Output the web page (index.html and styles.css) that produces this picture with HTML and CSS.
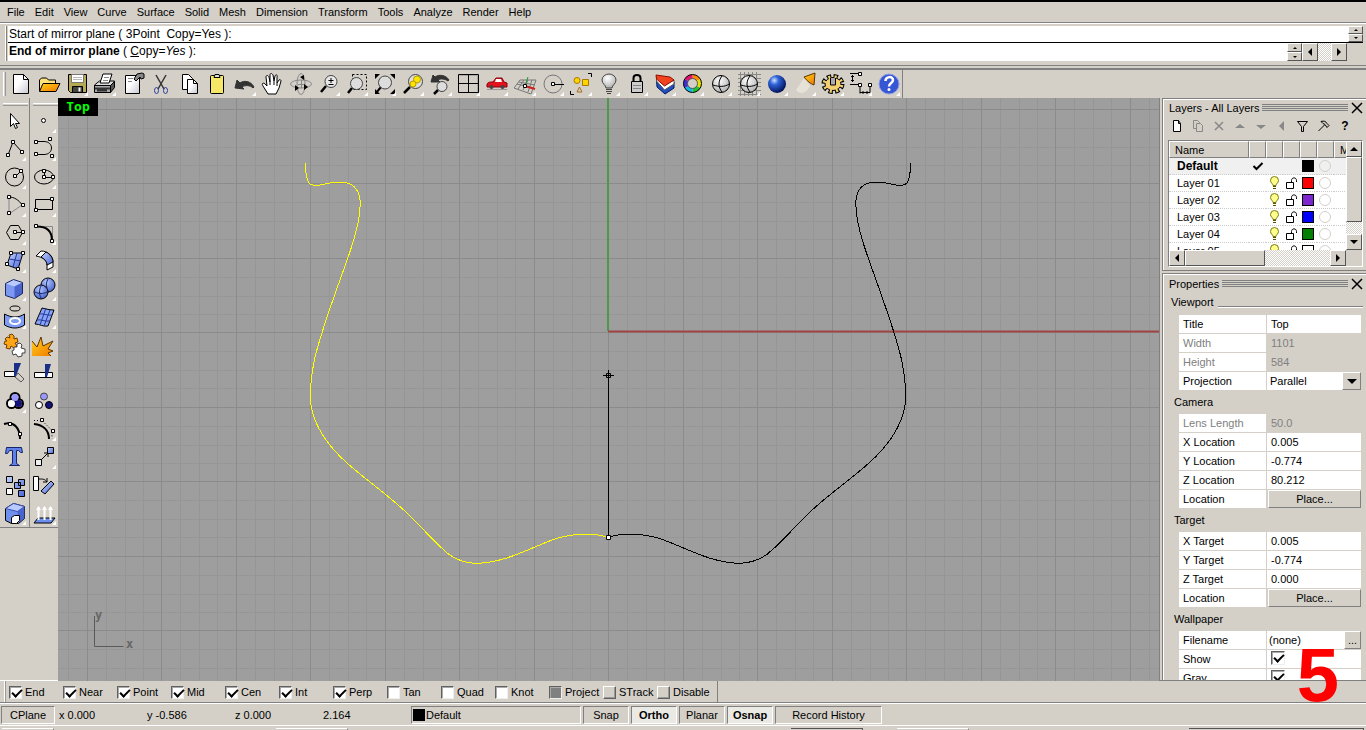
FILE: index.html
```html
<!DOCTYPE html>
<html lang="en">
<head>
<meta charset="utf-8">
<title>Rhinoceros - Top</title>
<link rel="stylesheet" href="styles.css">
</head>
<body>
<svg class="defs" aria-hidden="true">
  <defs>
    <linearGradient id="gBlue" x1="0" y1="0" x2="1" y2="1"><stop offset="0" stop-color="#c3d2fb"/><stop offset="1" stop-color="#4a68d8"/></linearGradient>
    <radialGradient id="gBall" cx="0.35" cy="0.3" r="0.7"><stop offset="0" stop-color="#cfe4ff"/><stop offset="0.35" stop-color="#2f63d8"/><stop offset="1" stop-color="#04145c"/></radialGradient>
    <radialGradient id="gGlobe" cx="0.4" cy="0.3" r="0.8"><stop offset="0" stop-color="#fff"/><stop offset="1" stop-color="#a8a8a8"/></radialGradient>
    <radialGradient id="gSphere" cx="0.4" cy="0.3" r="0.8"><stop offset="0" stop-color="#b4c6ff"/><stop offset="1" stop-color="#3a58c8"/></radialGradient>
    <linearGradient id="gOrange" x1="0" y1="0" x2="1" y2="1"><stop offset="0" stop-color="#ffd21a"/><stop offset="1" stop-color="#f07800"/></linearGradient>
    <linearGradient id="gPaper" x1="0" y1="0" x2="1" y2="1"><stop offset="0.4" stop-color="#fff"/><stop offset="1" stop-color="#c8c8d0"/></linearGradient>
    <symbol id="node" viewBox="0 0 4 4"><path d="M.5.5h3v3h-3z" fill="#fff" stroke="#000"/></symbol>
    <symbol id="bulb" viewBox="0 0 12 14"><path d="M4.500 9.500C4.500 7.500 2 7 2 4.500A4 4 0 0 1 10 4.500C10 7 7.500 7.500 7.500 9.500z" fill="#ffff8c" stroke="#7c7a10"/><path d="M4.500 10.500h3M4.500 12.500h3" stroke="#555500" fill="none"/></symbol>
    <symbol id="unlock" viewBox="0 0 13 14"><path d="M1.500 6.500h7v6h-7zM6.500 6V4.500C6.500 1 11.500 1 11.500 4.500V6" fill="none" stroke="#000"/></symbol>
  </defs>
</svg>
<div class="app">
<nav class="menu">
  <button>File</button><button>Edit</button><button>View</button><button>Curve</button><button>Surface</button><button>Solid</button><button>Mesh</button><button>Dimension</button><button>Transform</button><button>Tools</button><button>Analyze</button><button>Render</button><button>Help</button>
</nav>

<section class="command">
  <div class="cmdbox">
    <div class="cmdrow history">
      <div class="cmdtext">Start of mirror plane ( 3Point&nbsp; Copy=Yes ):</div>
      <div class="spin"><button aria-label="History up"><i class="tri up small"></i></button><button aria-label="History down"><i class="tri down small"></i></button></div>
    </div>
    <div class="cmdrow prompt">
      <div class="cmdtext"><b>End of mirror plane</b> ( <u>C</u>opy=<em>Yes</em> ):</div>
      <div class="spin"><button aria-label="Prompt up"><i class="tri up small"></i></button><button aria-label="Prompt down"><i class="tri down small"></i></button></div>
      <button class="sb" aria-label="Scroll left"><i class="tri left"></i></button><div class="track gap"></div><button class="sb" aria-label="Scroll right"><i class="tri right"></i></button>
      <div class="pad"></div>
    </div>
  </div>
</section>

<div class="dock">
<div class="toolbar">
  <button class="t" aria-label="New"><svg viewBox="0 0 28 28"><path d="M7.500 4.500h10l5 5v14h-15z" fill="url(#gPaper)"/><path d="M17.500 4.500v5h5"/></svg></button>
  <button class="t" aria-label="Open"><svg viewBox="0 0 28 28"><path d="M5.500 21V10l2-2h5l2 2h7v3" fill="#ffe37a"/><path d="M5.500 21.500L9 13.500h17l-4 8z" fill="url(#gOrange)"/></svg></button>
  <button class="t f" aria-label="Save"><svg viewBox="0 0 28 28"><path d="M6.500 4.500h18v18h-16l-2-2z" fill="#b5a954"/><path d="M9.500 4.500h12v8h-12z" fill="#fff" stroke="#777"/><path d="M11 7.500h9M11 9.500h9" stroke="#bbb"/><path d="M10.500 16.500h10v6h-10z" fill="#444"/><path d="M16.500 17.500h2v4h-2z" fill="#fff" stroke="none"/></svg></button>
  <button class="t f" aria-label="Print"><svg viewBox="0 0 28 28"><path d="M4.500 15l5-4h15l-3 5H4.500z" fill="#ddd"/><path d="M10 13l3-9h9l-3 9z" fill="#fff"/><path d="M4.500 15.500h16v7h-16z" fill="#aaa"/><path d="M20.500 22.500l4-5v-6l-4 4z" fill="#555"/><path d="M5 18.500h15M7 20.500h10" stroke-width="2" stroke="#333"/><path d="M14 7.500h5M13 10.500h5" stroke="#888"/></svg></button>
  <button class="t" aria-label="Document properties"><svg viewBox="0 0 28 28"><path d="M7.500 5.500h14v18h-14z" fill="url(#gPaper)"/><path d="M16 9l3-5 5-1 2 1v4l-3 1-1-2-4 4z" fill="#888"/><path d="M10 8.500h5M10 11.500h4" stroke="#888"/></svg></button>
  <button class="t" aria-label="Cut"><svg viewBox="0 0 28 28"><path d="M10 5l8 14M20 5l-8 14" stroke="#333" stroke-width="1.500"/><ellipse cx="10.500" cy="20.500" rx="2" ry="3" stroke="#2c3f9c"/><ellipse cx="19.500" cy="20.500" rx="2" ry="3" stroke="#2c3f9c"/></svg></button>
  <button class="t" aria-label="Copy"><svg viewBox="0 0 28 28"><path d="M8.500 4.500h6l4 4v11h-10z" fill="#fff"/><path d="M13.500 9.500h6l4 4v10h-10z" fill="url(#gPaper)"/><path d="M19.500 9.500v4h4"/></svg></button>
  <button class="t" aria-label="Paste"><svg viewBox="0 0 28 28"><rect x="8.500" y="5.500" width="13" height="18" rx="1" fill="#f6e766"/><path d="M12 7.500l1-3h4l1 3z" fill="#ddd"/></svg></button>
  <button class="t f" aria-label="Undo"><svg viewBox="0 0 28 28"><path d="M5 18l2-8 3 3c4-3 11-2 14 4l-1 1c-3-3-8-3-11-1l2 2z" fill="#333" stroke="#333"/></svg></button>
  <button class="t" aria-label="Pan"><svg viewBox="0 0 28 28"><path d="M10 24l-5-8c-2-3 1-4 3-1l1 1-1-9c0-2 2-2 3 0l1 5V5c0-2 2-2 3 0l1 6 1-5c1-2 3-1 2 1v6l2-3c1-1 2 0 2 1l-2 7-3 6z" fill="#fff"/><path d="M12 12v3M16 11v4M19 13v3"/></svg></button>
  <button class="t" aria-label="Rotate view"><svg viewBox="0 0 28 28"><ellipse cx="15" cy="14" rx="10.500" ry="4" stroke="#888"/><ellipse cx="15" cy="14" rx="4" ry="10.500" stroke="#888"/><path d="M15.500 10v8M12 14.500h7" stroke="#888"/><path d="M9 15l4 3-4 3zM14 7l4-2v5zM18 14l4 3-4 3z" fill="#000" stroke="none"/></svg></button>
  <button class="t f" aria-label="Zoom dynamic"><svg viewBox="0 0 28 28"><path d="M12 16l-5 6" stroke-width="2.500"/><circle cx="17" cy="11.500" r="6" fill="#e8e8e8" stroke="#444"/><path d="M17 8v5M14.500 10.500h5M14.500 14.500h5"/></svg></button>
  <button class="t f" aria-label="Zoom window"><svg viewBox="0 0 28 28"><path d="M10.500 4.500h14v15h-14z" stroke-dasharray="2 2"/><path d="M10 18l-4 5" stroke-width="2.500"/><circle cx="14.500" cy="13.500" r="6" fill="#ddd" stroke="#444"/></svg></button>
  <button class="t f" aria-label="Zoom extents"><svg viewBox="0 0 28 28"><path d="M5 9V4h5zM20 4h5v5zM5 19v5h5zM25 19v5h-5z" fill="#000" stroke="none"/><path d="M11 17l-5 6" stroke-width="2"/><circle cx="15" cy="12.500" r="6.500" fill="#ddd" stroke="#444"/></svg></button>
  <button class="t f" aria-label="Zoom selected"><svg viewBox="0 0 28 28"><path d="M12 17l-6 6" stroke-width="2.500"/><circle cx="17.500" cy="11.500" r="7" fill="#ddd" stroke="#444"/><circle cx="19" cy="9.500" r="3.500" fill="#ffe600" stroke="#b89b00"/><circle cx="15" cy="14" r="3" fill="#ffe600" stroke="#b89b00"/></svg></button>
  <button class="t f" aria-label="Undo view"><svg viewBox="0 0 28 28"><path d="M5 12l2-7 2 2c4-3 11-2 14 3l-1 1c-3-2-7-3-10-1l2 2z" fill="#333" stroke="#333"/><path d="M12 20l-4 4" stroke-width="2.500"/><circle cx="16" cy="16.500" r="5" fill="#ddd" stroke="#444"/></svg></button>
  <button class="t f" aria-label="Viewport layout"><svg viewBox="0 0 28 28"><path d="M5.500 5.500h18v16" stroke="#aaa"/><path d="M4.500 4.500h20v18h-20zM14.500 4v19M4 13.500h21"/></svg></button>
  <button class="t f" aria-label="Named views"><svg viewBox="0 0 28 28"><path d="M5 15c0-3 3-3 6-3l3-4h6l2 4 3 1v4H5z" fill="#e3121c" stroke="#8a0008"/><path d="M14 9h5l1 3h-7z" fill="#fff" stroke="none"/><circle cx="9.500" cy="17" r="2" fill="#444" stroke="none"/><circle cx="20.500" cy="17" r="2" fill="#444" stroke="none"/><path d="M5 19.500h20" stroke="#999"/></svg></button>
  <button class="t f" aria-label="Construction planes"><svg viewBox="0 0 28 28"><path d="M10 10h16l-5 14-17-6zM7 14l17 4M14 10l-6 9M18 10l-5 10M22 10l-4 12M9 12l16 3" stroke="#777"/><path d="M15 16l3-9" stroke="#1a9a30"/><path d="M15 16l10 3" stroke="#d02020" stroke-width="2"/><use href="#node" x="13" y="14" width="4" height="4"/></svg></button>
  <button class="t f" aria-label="Object snap"><svg viewBox="0 0 28 28"><circle cx="15" cy="14" r="9" stroke="#777"/><path d="M15 14.500h11"/><use href="#node" x="13" y="12" width="4" height="4"/></svg></button>
  <button class="t f" aria-label="Select"><svg viewBox="0 0 28 28"><circle cx="11" cy="10.500" r="3" fill="#ffd500" stroke="#a77900"/><path d="M16.500 9.500h6v6h-6z" fill="#ffd500" stroke="#a77900"/><path d="M13.500 17l2.500 5h-5z" stroke="#a86c20"/><path d="M22 3.500h3.500V7M4.500 21v3.500H8"/></svg></button>
  <button class="t f" aria-label="Hide objects"><svg viewBox="0 0 28 28"><path d="M12 18c0-3-4-4-4-8a7 6 0 0 1 14 0c0 4-4 5-4 8z" fill="url(#gGlobe)" stroke="#444"/><path d="M12 19.500h6M12 21.500h6M13 23.500h4" stroke="#444"/></svg></button>
  <button class="t f" aria-label="Lock objects"><svg viewBox="0 0 28 28"><path d="M11.500 12V8c0-4 7-4 7 0v4" stroke-width="2"/><path d="M9.500 11.500h11v11h-11z" fill="#ccc"/><path d="M11 15.500h8M11 18.500h8" stroke="#888"/></svg></button>
  <button class="t f" aria-label="Layers"><svg viewBox="0 0 28 28"><path d="M6.500 10l8 8 9.500-6v6l-9 6-8-7z" fill="#214fc0" stroke="#001a60"/><path d="M6.500 7l8 8 9.500-5v4l-9.500 6-8-9z" fill="#fff" stroke="#555"/><path d="M6 5l14 2 4 3-9.500 6-8-7z" fill="#f0421c" stroke="#8b0f00"/></svg></button>
  <button class="t f" aria-label="Object properties"><svg viewBox="0 0 28 28"><g stroke-width="4"><path d="M14.500 6.500a7 7 0 0 1 6 3.500" stroke="#ff8a00"/><path d="M20.500 10a7 7 0 0 1 0 7" stroke="#e8e000"/><path d="M20.500 17a7 7 0 0 1-6 3.500" stroke="#20c030"/><path d="M14.500 20.500a7 7 0 0 1-6-3.500" stroke="#10b8e8"/><path d="M8.500 17a7 7 0 0 1 0-7" stroke="#4030d8"/><path d="M8.500 10a7 7 0 0 1 6-3.500" stroke="#e81070"/></g><circle cx="14.500" cy="13.500" r="9"/><circle cx="14.500" cy="13.500" r="5" stroke="#555"/></svg></button>
  <button class="t f" aria-label="Shade"><svg viewBox="0 0 28 28"><circle cx="15" cy="14" r="8.500" fill="url(#gGlobe)"/><path d="M16 6c-4 5-4 11 0 16M7 15c6 2 12 2 16-1"/></svg></button>
  <button class="t f" aria-label="Shaded viewport"><svg viewBox="0 0 28 28"><path d="M6.500 2v24M10.500 2v24M14.500 2v24M18.500 2v24M22.500 2v24M4 4.500h23M4 8.500h23M4 12.500h23M4 16.500h23M4 20.500h23M4 24.500h23" stroke="#888"/><circle cx="15" cy="14" r="8.500" fill="url(#gGlobe)"/><path d="M16 6c-4 5-4 11 0 16M7 15c6 2 12 2 16-1"/></svg></button>
  <button class="t f" aria-label="Render"><svg viewBox="0 0 28 28"><circle cx="15" cy="14" r="9" fill="url(#gBall)" stroke="none"/></svg></button>
  <button class="t f" aria-label="Spotlight"><svg viewBox="0 0 28 28"><path d="M14 8L6 20c4 5 10 4 14-4z" fill="#e6e2d8" stroke="none"/><path d="M14 7l11-4-1 12c-3-1-7-4-10-8z" fill="url(#gOrange)" stroke="#5c3500"/></svg></button>
  <button class="t f" aria-label="Options"><svg viewBox="0 0 28 28"><ellipse cx="15" cy="14" rx="8.500" ry="7" stroke-width="6" stroke-dasharray="4 2.150"/><ellipse cx="15" cy="14" rx="8" ry="6.500" fill="#f3cf72"/><ellipse cx="15" cy="14" rx="8.500" ry="7" stroke="#f3cf72" stroke-width="4" stroke-dasharray="2 4.150" stroke-dashoffset="-1"/><path d="M12.500 8v7h5V8" fill="#aaa"/></svg></button>
  <button class="t f" aria-label="Dimension"><svg viewBox="0 0 28 28"><path d="M4 3.500h10M6.500 5v7M5 6.500h3M5 10.500h3M4 14.500h10v9M14 22.500h10v-9M17 21v3M21 21v3"/><use href="#node" x="12" y="2" width="4" height="4"/><use href="#node" x="12" y="13" width="4" height="4"/><use href="#node" x="22" y="13" width="4" height="4"/></svg></button>
  <button class="t f" aria-label="Help"><svg viewBox="0 0 28 28"><circle cx="15" cy="14" r="10" fill="#3656d4" stroke="#8c9ce8"/><path d="M11.500 11c0-5 7.500-5 7.500-1 0 3-4 3-4 6.500" stroke="#fff" stroke-width="2.500"/><circle cx="15" cy="19.500" r="1.500" fill="#fff" stroke="none"/></svg></button>
</div>
</div>

<main class="work">
  <aside class="tools">
    <div class="col">
      <button class="t" aria-label="Pointer"><svg viewBox="0 0 28 28"><path d="M10.500 6.500v13l3-3 2 5 2-1-2-4h4z" fill="#fff"/></svg></button>
      <button class="t f" aria-label="Polyline"><svg viewBox="0 0 28 28"><path d="M8 20l5-13 9 10"/><use href="#node" x="6" y="18" width="4" height="4"/><use href="#node" x="11" y="5" width="4" height="4"/><use href="#node" x="20" y="15" width="4" height="4"/></svg></button>
      <button class="t f" aria-label="Circle"><svg viewBox="0 0 28 28"><circle cx="14.500" cy="14" r="9"/><path d="M15 14l6-6"/><use href="#node" x="13" y="11" width="4" height="4"/><use href="#node" x="19" y="6" width="4" height="4"/></svg></button>
      <button class="t f" aria-label="Arc"><svg viewBox="0 0 28 28"><path d="M9 23V6M9 23l13-9" stroke="#888"/><path d="M9 6c5 0 10 3 13 8"/><use href="#node" x="7" y="4" width="4" height="4"/><use href="#node" x="7" y="20" width="4" height="4"/><use href="#node" x="21" y="12" width="4" height="4"/></svg></button>
      <button class="t f" aria-label="Polygon"><svg viewBox="0 0 28 28"><path d="M6.500 13.500l4-7h8l4 7-4 7h-8zM15 13.500h7"/><use href="#node" x="13" y="11" width="4" height="4"/><use href="#node" x="21" y="11" width="4" height="4"/></svg></button>
      <button class="t f" aria-label="Surface"><svg viewBox="0 0 28 28"><path d="M11 6h12l-5 16-11-4z" fill="url(#gBlue)"/><path d="M17 6l-4 14M9 12l12 2" stroke="#23399c"/><use href="#node" x="9" y="4" width="4" height="4"/><use href="#node" x="21" y="4" width="4" height="4"/><use href="#node" x="5" y="15" width="4" height="4"/><use href="#node" x="16" y="20" width="4" height="4"/></svg></button>
      <button class="t f" aria-label="Box"><svg viewBox="0 0 28 28"><path d="M5.500 8.500l8-4 9 3v11l-8 5-9-3z" fill="#7d98f0" stroke="none"/><path d="M5.500 8.500l8-4 9 3-8 4z" fill="#b9caff" stroke="none"/><path d="M14.500 11.500l8-4v11l-8 5z" fill="#4a64cc" stroke="none"/><path d="M5.500 8.500l8-4 9 3v11l-8 5-9-3z" stroke="#1a2766"/></svg></button>
      <button class="t f" aria-label="Project to surface"><svg viewBox="0 0 28 28"><ellipse cx="15" cy="5.500" rx="5" ry="2.500"/><path d="M4.500 11c7 4 14 4 20 0v11c-6 4-13 4-20 0z" fill="#7f9cf4"/><ellipse cx="15" cy="18" rx="5" ry="3" stroke="#fff" stroke-width="2"/></svg></button>
      <button class="t" aria-label="Join"><svg viewBox="0 0 28 28"><path d="M5 8l2-2 3 1-1-3 3-1 2 2 0 3 3-1 1 4-3 1 2 3-3 2-3-2-1 3-4-1 1-3-3-1 1-3 2 0z" fill="#ffa617" stroke="#6e3c00"/><path d="M14 16l3 0 0-3 3-1 2 2-1 3 4 1 0 4-3 0 0 3-4 1-2-3-3 1-1-4 2-1z" fill="#fff" stroke="#444"/></svg></button>
      <button class="t" aria-label="Trim"><svg viewBox="0 0 28 28"><path d="M4.500 12.500h11v5h-11z" fill="#fff"/><path d="M14 4h7l-5 13h-2z" fill="#1c2f88" stroke="none"/><path d="M18 14l6 6-3 3-6-5z" stroke="#555"/></svg></button>
      <button class="t f" aria-label="Group"><svg viewBox="0 0 28 28"><g stroke-width="2"><circle cx="15" cy="10.500" r="4.500"/><circle cx="11.500" cy="16.500" r="4.500"/><circle cx="18.500" cy="16.500" r="4.500"/></g><circle cx="11.500" cy="16.500" r="3.500" fill="#fff" stroke="none"/><circle cx="18.500" cy="16.500" r="3.500" fill="#15127a" stroke="none"/><circle cx="15" cy="10.500" r="3.500" fill="#9a98ff" stroke="none"/></svg></button>
      <button class="t" aria-label="Edit points"><svg viewBox="0 0 28 28"><path d="M4 9c10-3 16 4 16 15" stroke-width="2"/><use href="#node" x="8" y="7" width="4" height="4"/><use href="#node" x="18" y="17" width="4" height="4"/></svg></button>
      <button class="t" aria-label="Text"><svg viewBox="0 0 28 28"><path d="M6.500 4.500h15l1 5h-2l-2-2h-2v13l3 2h-10l3-2v-13h-3l-2 3h-2z" fill="#5f80e6" stroke="#16246c"/></svg></button>
      <button class="t" aria-label="Array"><svg viewBox="0 0 28 28"><g fill="url(#gBlue)"><path d="M6.500 5.500h6v6h-6zM18.500 8.500h6v6h-6zM14.500 11.500h6v6h-6zM18.500 19.500h6v6h-6z"/></g><path d="M6.500 17.500h6v6h-6z" fill="#fff"/></svg></button>
      <button class="t f" aria-label="Block"><svg viewBox="0 0 28 28"><path d="M5.500 9.500l8-5 11 3v12l-6 5h-7l-6-3z" fill="#6f8fec"/><path d="M5.500 9.500l8-5 11 3-7 5z" fill="#b9caff" stroke="#3a50b0"/><path d="M17.500 12.500l7-5v12l-6 4z" fill="#4a64cc" stroke="none"/><path d="M11.500 18.500l3-2h5v5l-3 3h-5z" fill="#fff"/></svg></button>
    </div>
    <div class="col">
      <button class="t f" aria-label="Point"><svg viewBox="0 0 28 28"><circle cx="13.500" cy="13.500" r="2" fill="#fff"/></svg></button>
      <button class="t f" aria-label="Curve"><svg viewBox="0 0 28 28"><path d="M6 6.500h8c10 0 10 13 0 13H6"/><use href="#node" x="4" y="5" width="4" height="4"/><use href="#node" x="4" y="17" width="4" height="4"/><use href="#node" x="18" y="2" width="4" height="4"/><use href="#node" x="20" y="19" width="4" height="4"/></svg></button>
      <button class="t f" aria-label="Ellipse"><svg viewBox="0 0 28 28"><ellipse cx="14" cy="14" rx="9.500" ry="7"/><path d="M14.500 8v6.500H23"/><use href="#node" x="12" y="6" width="4" height="4"/><use href="#node" x="12" y="12" width="4" height="4"/><use href="#node" x="21" y="12" width="4" height="4"/></svg></button>
      <button class="t f" aria-label="Rectangle"><svg viewBox="0 0 28 28"><path d="M5.500 8.500h17v10h-17z"/><use href="#node" x="20" y="6" width="4" height="4"/><use href="#node" x="4" y="17" width="4" height="4"/></svg></button>
      <button class="t f" aria-label="Fillet curves"><svg viewBox="0 0 28 28"><path d="M7 7.500h15.500V21" stroke="#888"/><path d="M7 7.500c10 0 15 4 15 14" stroke-width="2"/><use href="#node" x="4" y="5" width="4" height="4"/><use href="#node" x="20" y="20" width="4" height="4"/></svg></button>
      <button class="t f" aria-label="Fillet surface"><svg viewBox="0 0 28 28"><path d="M6 9l5-5c7 0 12 5 12 11v5l-6 3v-5c0-5-5-8-11-9z" fill="#fff"/><path d="M11 10l5-5c4 2 7 6 7 10l-6 3c0-3-2-6-6-8z" fill="url(#gBlue)"/></svg></button>
      <button class="t f" aria-label="Boolean union"><svg viewBox="0 0 28 28"><circle cx="18" cy="10" r="7" fill="url(#gSphere)"/><circle cx="11" cy="17" r="7" fill="url(#gSphere)"/><path d="M11 11c-2 4-2 8 0 12M5 17c4 2 8 2 12 0M18 4c-2 4-2 6-1 9" stroke="#1a2766"/></svg></button>
      <button class="t f" aria-label="Surface edit"><svg viewBox="0 0 28 28"><path d="M12 5c4 1 8 2 12 2l-6 16c-5 1-8-2-13-2z" fill="#88a3f4"/><path d="M16 5l-6 17M20 7l-6 16M9 11c4-1 8 2 13 1M7 17c4-1 8 2 13 1" stroke="#23399c"/></svg></button>
      <button class="t" aria-label="Explode"><svg viewBox="0 0 28 28"><path d="M2 25V10l5 6 4-10 2 9 10-5-5 8 5 2-5 2 3 3z" fill="url(#gOrange)" stroke="none"/><path d="M2 10l5 6 4-10 2 9 10-5-5 8 5 2-5 2 3 3" stroke="#5c3500"/></svg></button>
      <button class="t" aria-label="Split"><svg viewBox="0 0 28 28"><path d="M4.500 13.500h18v5h-18z" fill="#fff"/><path d="M15 5h6l-4 13h-2z" fill="#1c2f88" stroke="none"/></svg></button>
      <button class="t" aria-label="Ungroup"><svg viewBox="0 0 28 28"><circle cx="14" cy="9.500" r="3.500" fill="#9a98ff" stroke="#444"/><circle cx="9" cy="18" r="3.500" fill="#fff"/><circle cx="19" cy="18" r="3.500" fill="#15127a"/></svg></button>
      <button class="t f" aria-label="Points on"><svg viewBox="0 0 28 28"><path d="M4 5.500h8l10 10v8" stroke-dasharray="1 2"/><path d="M4 9c9 1 15 6 15 15" stroke-width="2"/><use href="#node" x="10" y="3" width="4" height="4"/><use href="#node" x="21" y="14" width="4" height="4"/></svg></button>
      <button class="t f" aria-label="Move"><svg viewBox="0 0 28 28"><path d="M11 17l7-7M14 10h4v4"/><path d="M5.500 16.500h6v6h-6z" fill="#eee"/><path d="M17.500 4.500h6v6h-6z" fill="url(#gBlue)"/></svg></button>
      <button class="t" aria-label="Rotate"><svg viewBox="0 0 28 28"><path d="M3.500 5.500h5v14h-5z" fill="#fff"/><path d="M11 20l10-10 3 3-9 10z" fill="url(#gBlue)"/><path d="M9 8c4 0 6 0 8 3M17 7v4h-4"/></svg></button>
      <button class="t f" aria-label="Analyze direction"><svg viewBox="0 0 28 28"><path d="M8 19h17l-4 5H4z" fill="#6f8fec"/><path d="M8.500 21V8M14.500 21V8M20.500 21V8" stroke="#fff" stroke-width="2"/><path d="M6 11l2.500-4 2.500 4zM12 11l2.500-4 2.500 4zM18 11l2.500-4 2.500 4z" fill="#fff" stroke="none"/></svg></button>
    </div>
  </aside>

  <section class="viewport">
    <svg class="scene" role="img" aria-label="Top viewport">
      <defs>
        <pattern id="grid" x="29" y="11" width="149" height="149" patternUnits="userSpaceOnUse">
          <path d="M19.500 0v149M38.500 0v149M56.500 0v149M93.500 0v149M112.500 0v149M130.500 0v149M0 19.500h149M0 38.500h149M0 56.500h149M0 93.500h149M0 112.500h149M0 130.500h149" stroke="#969696"/>
          <path d="M.5 0v149M74.500 0v149M0 .5h149M0 74.500h149" stroke="#8b8b8b"/>
        </pattern>
        <path id="profile" d="M305.500 163C305.500 170 306 177 308 181C310 186 315 186 323 184.500C332 182 341 181 349 183.500C357 187 361 195 360 207C359 232 346 262 335 294C328 314 318 342 314 362C310 382 310 395 311 405C314 427 330 448 347 463C367 481 386 493 407 513C422 527 432 540 444 550C452 558 463 563 477 563.300C505 563 532 547 555 539C573 533 593 533 608 537"/>
      </defs>
      <rect width="100%" height="100%" fill="#9e9e9e"/>
      <rect width="100%" height="100%" fill="url(#grid)"/>
      <g fill="none">
        <path d="M550 0v233" stroke="#4a9a4a" stroke-width="2"/>
        <path d="M550 233.500H2000" stroke="#a04444" stroke-width="2"/>
        <g transform="translate(-58 -98)">
          <use href="#profile" stroke="#ff0" shape-rendering="crispEdges"/>
          <use href="#profile" transform="matrix(-1 0 0 1 1216 0)" stroke="#000" shape-rendering="crispEdges"/>
          <path d="M608.500 370v166M603 375.500h11M606.500 373.500h4v4h-4z" stroke="#000"/>
          <path d="M606.500 535.500h4v4h-4z" fill="#fff" stroke="#000"/>
          <path d="M94.500 616v30.500h29" stroke="#5a5a5a"/>
          <text class="axis" x="95" y="619">y</text><text class="axis" x="126" y="648">x</text>
        </g>
      </g>
    </svg>
    <div class="vtitle">Top</div>
  </section>

  <aside class="panels">
    <section class="panel layers">
      <header class="ptitle"><h2>Layers - All Layers</h2><span class="grip"></span><button class="close" aria-label="Close layers"><svg viewBox="0 0 12 12"><path d="M1 1l10 10M11 1L1 11"/></svg></button></header>
      <div class="ltools">
        <button aria-label="New layer"><svg viewBox="0 0 14 14"><path d="M3.500 1.500h5l2 3v8h-7z" fill="#fff"/><path d="M8.500 1.500v3h2"/></svg></button>
        <button aria-label="New sublayer"><svg viewBox="0 0 14 14"><path d="M2.500 1.500h4l2 2v6h-6z" stroke="#888"/><path d="M5.500 4.500h4l2 2v6h-6z" fill="#d4d0c8" stroke="#888"/></svg></button>
        <button aria-label="Delete layer"><svg viewBox="0 0 14 14"><path d="M3 3l8 8M11 3l-8 8" stroke="#888" stroke-width="1.500"/></svg></button>
        <button aria-label="Move up"><svg viewBox="0 0 14 14"><path d="M7 5l5 4H2z" fill="#888" stroke="none"/></svg></button>
        <button aria-label="Move down"><svg viewBox="0 0 14 14"><path d="M7 10l5-4H2z" fill="#888" stroke="none"/></svg></button>
        <button aria-label="Move to parent"><svg viewBox="0 0 14 14"><path d="M4 7l5-5v10z" fill="#888" stroke="none"/></svg></button>
        <button aria-label="Filter"><svg viewBox="0 0 14 14"><path d="M1.500 2.500h10l-4 5v5h-2v-5z"/></svg></button>
        <button aria-label="Layer tools"><svg viewBox="0 0 14 14"><path d="M1.500 12l6-6M4 2.500c3-1 5 0 6 2l2 2-2 2-2-3-2-1z"/></svg></button>
        <button class="q" aria-label="Layer help">?</button>
      </div>
      <div class="lbox">
        <div class="lview">
          <table class="ltable">
            <colgroup><col class="cn"><col class="ci"><col class="ci"><col class="ci"><col class="ci"><col class="ci"><col class="cm"></colgroup>
            <thead><tr><th class="nm">Name</th><th></th><th></th><th></th><th></th><th></th><th class="nm">M</th></tr></thead>
            <tbody>
              <tr class="cur"><td>Default</td><td><svg class="m" viewBox="0 0 12 14"><path d="M2 7l3 3 6-6" fill="none" stroke="#000" stroke-width="2"/></svg></td><td></td><td></td><td><i class="sw k"></i></td><td><i class="mat"></i></td><td></td></tr>
              <tr><td>Layer 01</td><td></td><td><svg class="m"><use href="#bulb"/></svg></td><td><svg class="m"><use href="#unlock"/></svg></td><td><i class="sw r"></i></td><td><i class="mat"></i></td><td></td></tr>
              <tr><td>Layer 02</td><td></td><td><svg class="m"><use href="#bulb"/></svg></td><td><svg class="m"><use href="#unlock"/></svg></td><td><i class="sw p"></i></td><td><i class="mat"></i></td><td></td></tr>
              <tr><td>Layer 03</td><td></td><td><svg class="m"><use href="#bulb"/></svg></td><td><svg class="m"><use href="#unlock"/></svg></td><td><i class="sw b"></i></td><td><i class="mat"></i></td><td></td></tr>
              <tr><td>Layer 04</td><td></td><td><svg class="m"><use href="#bulb"/></svg></td><td><svg class="m"><use href="#unlock"/></svg></td><td><i class="sw g"></i></td><td><i class="mat"></i></td><td></td></tr>
              <tr><td>Layer 05</td><td></td><td><svg class="m"><use href="#bulb"/></svg></td><td><svg class="m"><use href="#unlock"/></svg></td><td><i class="sw w"></i></td><td><i class="mat"></i></td><td></td></tr>
            </tbody>
          </table>
        </div>
        <div class="vbar"><button class="sb" aria-label="Scroll up"><i class="tri up"></i></button><div class="thumb"></div><div class="track"></div><button class="sb" aria-label="Scroll down"><i class="tri down"></i></button></div>
        <div class="hbar"><button class="sb" aria-label="Scroll left"><i class="tri left"></i></button><div class="thumb"></div><div class="track"></div><button class="sb" aria-label="Scroll right"><i class="tri right"></i></button></div>
      </div>
    </section>

    <section class="panel props">
      <header class="ptitle"><h2>Properties</h2><span class="grip"></span><button class="close" aria-label="Close properties"><svg viewBox="0 0 12 12"><path d="M1 1l10 10M11 1L1 11"/></svg></button></header>
      <h3 class="group">Viewport</h3>
      <div class="form">
        <label for="p1">Title</label><input id="p1" value="Top">
        <label for="p2" class="off">Width</label><input id="p2" value="1101" disabled>
        <label for="p3" class="off">Height</label><input id="p3" value="584" disabled>
        <label for="p4">Projection</label><div class="drop"><select id="p4"><option>Parallel</option><option>Perspective</option></select><i class="tri down big"></i></div>
      </div>
      <h3>Camera</h3>
      <div class="form">
        <label for="p5" class="off">Lens Length</label><input id="p5" value="50.0" disabled>
        <label for="p6">X Location</label><input id="p6" value="0.005">
        <label for="p7">Y Location</label><input id="p7" value="-0.774">
        <label for="p8">Z Location</label><input id="p8" value="80.212">
        <label for="p9">Location</label><button id="p9" class="place">Place...</button>
      </div>
      <h3>Target</h3>
      <div class="form">
        <label for="p10">X Target</label><input id="p10" value="0.005">
        <label for="p11">Y Target</label><input id="p11" value="-0.774">
        <label for="p12">Z Target</label><input id="p12" value="0.000">
        <label for="p13">Location</label><button id="p13" class="place">Place...</button>
      </div>
      <h3>Wallpaper</h3>
      <div class="form">
        <label for="p14">Filename</label><div class="file"><input id="p14" value="(none)"><button aria-label="Browse">...</button></div>
        <label for="p15">Show</label><div class="chk"><input id="p15" type="checkbox" checked></div>
        <label for="p16">Gray</label><div class="chk"><input id="p16" type="checkbox" checked></div>
      </div>
    </section>
  </aside>
</main>

<div class="osnap">
  <div class="snaps">
    <label><input type="checkbox" checked>End</label><label><input type="checkbox" checked>Near</label><label><input type="checkbox" checked>Point</label><label><input type="checkbox" checked>Mid</label><label><input type="checkbox" checked>Cen</label><label><input type="checkbox" checked>Int</label><label><input type="checkbox" checked>Perp</label><label><input type="checkbox">Tan</label><label><input type="checkbox">Quad</label><label><input type="checkbox">Knot</label><label><input type="checkbox" class="dark">Project</label><label><input type="checkbox" class="raised">STrack</label><label><input type="checkbox" class="raised">Disable</label>
  </div>
</div>

<footer class="status">
  <button class="pane cplane">CPlane</button>
  <span class="coord">x 0.000</span><span class="coord">y -0.586</span><span class="coord">z 0.000</span><span class="coord">2.164</span>
  <button class="pane layer"><i></i>Default</button>
  <button class="pane">Snap</button><button class="pane on">Ortho</button><button class="pane">Planar</button><button class="pane on">Osnap</button><button class="pane rec">Record History</button>
</footer>
<div class="taskbar"><span></span><span></span><span class="dark"></span><span></span><span class="dark tray"></span></div>
<div class="step">5</div>
</div>
</body>
</html>
```
FILE: styles.css
```css
* { box-sizing: border-box; }

body {
  margin: 0;
  background: #d4d0c8;
  color: #000;
  font: 11px/14px "Liberation Sans", Arial, sans-serif;
}

button, input, select {
  margin: 0;
  padding: 0;
  border: 0;
  border-radius: 0;
  background: none;
  color: inherit;
  font: inherit;
}

h2, h3 { margin: 0; font: inherit; }

.defs { position: absolute; width: 0; height: 0; }

.app {
  position: relative;
  display: flex;
  flex-direction: column;
  height: 100vh;
  overflow: hidden;
  border-top: 2px solid #000;
}

/* Menu */
.menu {
  display: flex;
  flex: none;
  gap: 10px;
  height: 21px;
  padding: 0 7px;
  border-bottom: 1px solid #808080;
}

/* Command area */
.command {
  flex: none;
  height: 43px;
  padding: 2px 3px 4px 6px;
  border-top: 1px solid #fff;
  border-bottom: 1px solid #808080;
}

.cmdbox {
  border-left: 1px solid #808080;
  box-shadow: -1px 0 #fff;
  padding-left: 1px;
  font-size: 12px;
}

.cmdrow { display: flex; background: #fff; }
.history { height: 17px; border-bottom: 1px solid #000; }
.prompt { height: 18px; }
.cmdtext { flex: 1; padding-left: 1px; line-height: 16px; white-space: pre; }

.spin { display: flex; flex-direction: column; width: 15px; }
.spin button { flex: 1; display: grid; place-items: center; min-height: 0; }

.spin button, .sb, .thumb {
  background: #d4d0c8;
  border: 1px solid;
  border-color: #fff #555 #555 #fff;
}

.sb { display: grid; place-items: center; flex: none; width: 16px; height: 16px; }
.prompt .sb { height: 18px; }

.track {
  background: repeating-conic-gradient(#fff 0 25%, #d4d0c8 0 50%) 0 0 / 2px 2px;
}
.gap { width: 13px; }
.pad { width: 16px; background: #d4d0c8; }

.tri { display: block; border: 4px solid transparent; }
.up { border-top: 0; border-bottom-color: #000; }
.down { border-bottom: 0; border-top-color: #000; }
.left { border-left: 0; border-right-color: #000; }
.right { border-right: 0; border-left-color: #000; }
.small { border-width: 2px; }
.small.up { border-top: 0; }
.small.down { border-bottom: 0; }
.big { border-width: 5px; border-bottom: 0; }

/* Main toolbar */
.dock {
  display: flex;
  flex: none;
  height: 30px;
  margin-top: 2px;
  border-top: 2px solid #808080;
}
.toolbar {
  display: flex;
  padding-left: 6px;
  border-right: 1px solid #808080;
  background: linear-gradient(#fff, #fff) 3px 2px / 1px 24px no-repeat, linear-gradient(#999, #999) 5px 2px / 1px 24px no-repeat;
}

.t {
  position: relative;
  display: block;
  flex: none;
  width: 28px;
  height: 28px;
}
.t svg { display: block; width: 28px; height: 28px; fill: none; stroke: #000; }
.f::after {
  content: "";
  position: absolute;
  right: 2px;
  bottom: 2px;
  border: 2px solid;
  border-color: transparent #fff #fff transparent;
}

/* Work area */
.work { display: flex; flex: 1; min-height: 0; }

.tools {
  display: flex;
  align-items: flex-start;
  flex: none;
  width: 58px;
  border-bottom: 1px solid #fff;
}
.col {
  flex: 1;
  padding-top: 9px;
  border-right: 1px solid #808080;
  border-bottom: 1px solid #808080;
  background: linear-gradient(#fff, #fff) 3px 5px / 25px 1px no-repeat, linear-gradient(#999, #999) 3px 7px / 25px 1px no-repeat;
}
.col:last-child { border-right: 0; }

.viewport { position: relative; flex: 1; min-width: 0; overflow: hidden; border-right: 1px solid #808080; }
.scene { display: block; width: 100%; height: 100%; }
.axis { fill: #666; font: bold 12px "DejaVu Sans Mono", monospace; }
.vtitle {
  position: absolute;
  top: 0;
  left: 0;
  width: 40px;
  background: #000;
  color: #0f0;
  font: bold 13px/18px "DejaVu Sans Mono", monospace;
  text-align: center;
}

/* Docked panels */
.panels {
  display: flex;
  flex-direction: column;
  flex: none;
  width: 206px;
  padding-left: 2px;
  overflow: hidden;
  border-bottom: 1px solid #808080;
}
.panel { flex: none; border-left: 1px solid #808080; border-top: 1px solid #808080; box-shadow: inset 1px 1px #fff; padding: 1px 3px 0 6px; }
.layers { height: 173px; padding-top: 0; border-bottom: 1px solid #808080; }
.props { margin-top: 2px; }

.ptitle { display: flex; align-items: center; height: 17px; gap: 3px; }
.grip { flex: 1; height: 7px; border: solid #808080; border-width: 1px 0; background: repeating-linear-gradient(#d4d0c8 0 1px, #808080 1px 2px); }
.close { width: 12px; height: 12px; }
.close svg { display: block; stroke: #000; fill: none; stroke-width: 1.500; }

.ltools { display: flex; gap: 7px; height: 24px; padding: 3px 0 0 1px; }
.ltools button { width: 14px; height: 14px; }
.ltools svg { display: block; width: 14px; height: 14px; stroke: #000; fill: none; }
.ltools .q { font-weight: bold; font-size: 12px; }

.lbox {
  display: grid;
  grid-template: 109px 16px / 1fr 16px;
  height: 127px;
  margin: 0 0 0 -1px;
  border: 1px solid #808080;
  border-color: #808080 #fff #fff #808080;
}
.lview { overflow: hidden; background: #fff; }
.ltable { width: 178px; table-layout: fixed; border-collapse: separate; border-spacing: 0; }
.cn { width: 80px; }
.ci { width: 17px; }
.cm { width: 13px; }
.ltable th { height: 17px; padding: 0; background: #d4d0c8; border: 1px solid; border-color: #fff #808080 #808080 #fff; font-weight: normal; text-align: left; overflow: hidden; line-height: 14px; }
.ltable .nm { padding-left: 5px; }
.ltable td { height: 17px; padding: 0 0 0 2px; border-bottom: 1px dotted #ccc; line-height: 14px; }
.ltable td:first-child { padding-left: 8px; }
.cur { background: #f0f0f0; }
.cur td:first-child { font-weight: bold; font-size: 12px; }
.m { display: block; width: 13px; height: 14px; }
.sw { display: block; width: 12px; height: 12px; border: 1px solid #000; }
.k { background: #000; }
.r { background: #f00; }
.p { background: #7d26cd; }
.b { background: #00f; }
.g { background: #008000; }
.w { background: #fff; }
.mat { display: block; width: 12px; height: 12px; border: 1px solid #d4d0c8; border-radius: 6px; }

.vbar { display: flex; flex-direction: column; }
.vbar .thumb { height: 65px; }
.vbar .track, .hbar .track { flex: 1; }
.hbar { display: flex; }
.hbar .thumb { width: 80px; }

/* Properties */
.props h3 { padding-left: 5px; margin: 5px 0 4px; height: 15px; line-height: 15px; }
.props .group { display: flex; gap: 4px; margin: 3px 0 5px; padding-left: 2px; }
.group::after { content: ""; flex: 1; height: 11px; border-bottom: 1px solid #808080; box-shadow: 0 1px #fff; }
.form {
  display: grid;
  grid-template-columns: 87px minmax(0, 1fr);
  grid-auto-rows: 18px;
  gap: 1px;
  margin: 0 2px 0 10px;
}
.form label { background: #fff; padding-left: 4px; line-height: 18px; }
.form input { width: 100%; background: #fff; padding-left: 4px; }
.form input:disabled { background: none; color: #808080; }
.form .off { color: #808080; }
.drop { position: relative; display: flex; }
.drop select { flex: 1; appearance: none; background: #fff; padding-left: 3px; }
.drop .tri { position: absolute; right: 4px; top: 7px; }
.drop::after { content: ""; width: 17px; border: 1px solid; border-color: #fff #808080 #808080 #fff; }
.place { margin-left: 1px; border: 1px solid; border-color: #fff #808080 #808080 #fff; }
.file { display: flex; background: #fff; }
.file input { flex: 1; min-width: 0; padding-left: 2px; }
.file button { width: 17px; background: #d4d0c8; border: 1px solid; border-color: #fff #808080 #808080 #fff; }
.chk { background: #fff; padding: 1px 0 0 4px; }

input[type="checkbox"] {
  appearance: none;
  flex: none;
  width: 13px;
  height: 13px;
  padding: 0;
  background: #fff;
  border: 1px solid;
  border-color: #606060 #eee #eee #606060;
  box-shadow: inset 1px 1px #aaa;
}
.form input[type="checkbox"] { display: block; width: 14px; height: 14px; padding: 0; }
input[type="checkbox"]:checked::before {
  content: "";
  display: block;
  width: 8px;
  height: 4px;
  margin: 2px 0 0 2px;
  border: solid #000;
  border-width: 0 0 2px 2px;
  transform: rotate(-45deg);
}
.osnap .dark { background: #808080; }
.osnap .raised { background: #d4d0c8; border-color: #fff #606060 #606060 #fff; box-shadow: inset -1px -1px #999; }

/* Object snap bar */
.osnap { flex: none; height: 22px; border-bottom: 1px solid #808080; }
.snaps {
  display: grid;
  grid-template-columns: repeat(13, 54px);
  width: 714px;
  height: 21px;
  margin-left: 4px;
  padding: 1px 0 0 4px;
  border-left: 1px solid #fff;
  border-right: 1px solid #808080;
  box-shadow: inset 1px 0 #999;
}
.snaps label { display: flex; align-items: center; gap: 3px; white-space: nowrap; }

/* Status bar */
.status {
  display: flex;
  align-items: center;
  flex: none;
  height: 23px;
  padding: 1px 1px 0;
  border-top: 1px solid #fff;
  border-bottom: 1px solid #fff;
}
.pane {
  width: 46px;
  height: 18px;
  margin-right: 2px;
  border: 1px solid;
  border-color: #808080 #fff #fff #808080;
}
.cplane { width: 54px; margin-right: 4px; }
.coord { width: 88px; }
.layer { display: flex; align-items: center; gap: 1px; width: 170px; }
.layer i { width: 12px; height: 12px; margin-left: 1px; background: #000; }
.on { background: #ebe9e4; font-weight: bold; }
.rec { width: 107px; }

.taskbar { display: flex; flex: none; height: 4px; padding: 2px 0 0 2px; }
.taskbar span { width: 52px; margin-right: 222px; border-top: 1px solid #fff; border-right: 1px solid #808080; }
.taskbar span + span { width: 72px; margin-right: 443px; }
.taskbar .dark + span { margin-right: 220px; }
.taskbar span.dark { border-color: #555; margin-right: 34px; }
.taskbar span.tray { flex: 1; margin-right: 2px; }

.step {
  position: absolute;
  right: 27px;
  bottom: 20px;
  color: #f00;
  font: bold 76px/70px "Liberation Sans", Arial, sans-serif;
}
```
